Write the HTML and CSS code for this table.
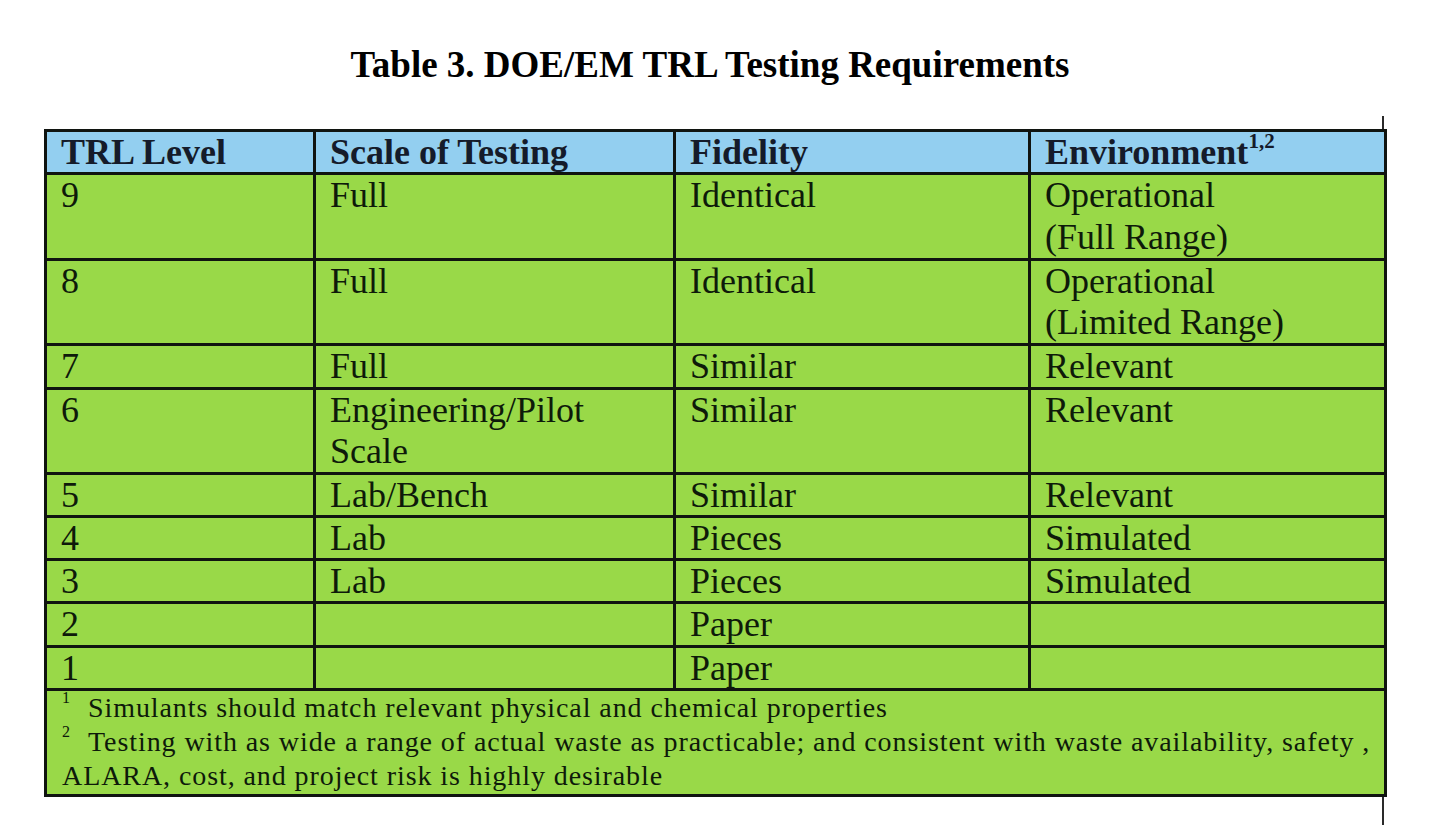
FILE: index.html
```html
<!DOCTYPE html>
<html lang="en">
<head>
<meta charset="utf-8">
<title>Table 3. DOE/EM TRL Testing Requirements</title>
<link rel="stylesheet" href="styles.css">
</head>
<body>
<h1 class="title">Table 3. DOE/EM TRL Testing Requirements</h1>
<div class="sheet">
  <table class="trl">
    <colgroup>
      <col class="c1"><col class="c2"><col class="c3"><col class="c4">
    </colgroup>
    <thead>
      <tr>
        <th>TRL Level</th>
        <th>Scale of Testing</th>
        <th>Fidelity</th>
        <th>Environment<sup class="hsup">1,2</sup></th>
      </tr>
    </thead>
    <tbody>
      <tr class="tall"><td>9</td><td>Full</td><td>Identical</td><td>Operational<br>(Full Range)</td></tr>
      <tr><td>8</td><td>Full</td><td>Identical</td><td>Operational<br>(Limited Range)</td></tr>
      <tr><td>7</td><td>Full</td><td>Similar</td><td>Relevant</td></tr>
      <tr><td>6</td><td>Engineering/Pilot<br>Scale</td><td>Similar</td><td>Relevant</td></tr>
      <tr class="compact"><td>5</td><td>Lab/Bench</td><td>Similar</td><td>Relevant</td></tr>
      <tr class="compact"><td>4</td><td>Lab</td><td>Pieces</td><td>Simulated</td></tr>
      <tr class="compact"><td>3</td><td>Lab</td><td>Pieces</td><td>Simulated</td></tr>
      <tr><td>2</td><td></td><td>Paper</td><td></td></tr>
      <tr class="compact"><td>1</td><td></td><td>Paper</td><td></td></tr>
      <tr class="notes">
        <td colspan="4">
          <div class="note-line"><sup class="fsup">1</sup>Simulants should match relevant physical and chemical properties</div>
          <div class="note-line"><sup class="fsup">2</sup>Testing with as wide a range of actual waste as practicable; and consistent with waste availability, safety ,</div>
          <div class="note-line">ALARA, cost, and project risk is highly desirable</div>
        </td>
      </tr>
    </tbody>
  </table>
</div>
</body>
</html>
```
FILE: styles.css
```css
html, body {
  margin: 0;
  padding: 0;
  background: #ffffff;
}

body {
  font-family: "Liberation Serif", "Times New Roman", serif;
  color: #0d160a;
  width: 1456px;
  height: 825px;
  overflow: hidden;
}

.title {
  margin: 0 0 0 44px;
  width: 1332px;
  padding: 43px 8px 0 0;
  font-size: 37px;
  line-height: 43px;
  font-weight: bold;
  text-align: center;
  color: #000;
}

.sheet {
  margin: 30px 0 0 44px;
  width: 1340px;
  height: 709px;
  box-sizing: border-box;
  padding-top: 13px;
  border-right: 2px solid #2a2a2a;
}

.trl {
  border-collapse: collapse;
  table-layout: fixed;
  width: 1340px;
}

.c1 { width: 269px; }
.c2 { width: 360px; }
.c3 { width: 355px; }
.c4 { width: 356px; }

.trl th,
.trl td {
  border: 3px solid #101410;
  padding: 0 0 0 14px;
  text-align: left;
  vertical-align: top;
  font-size: 36px;
  line-height: 41px;
}

.trl th {
  background: #93cff0;
  color: #151b2a;
  font-weight: bold;
  line-height: 40px;
  height: 40px;
}

.trl td {
  background: #99d948;
  color: #0e1a0a;
}

.trl .tall td {
  line-height: 41.5px;
}

.trl .compact td {
  line-height: 40px;
}

.hsup {
  font-size: 21px;
  line-height: 0;
  vertical-align: 16px;
}

.trl .notes td {
  font-size: 28px;
  line-height: 34px;
  letter-spacing: 0.92px;
  padding: 0 0 1px 15px;
}

.note-line {
  white-space: nowrap;
}

.fsup {
  display: inline-block;
  width: 26px;
  font-size: 16px;
  line-height: 0;
  letter-spacing: 0;
  vertical-align: 14px;
}
```
